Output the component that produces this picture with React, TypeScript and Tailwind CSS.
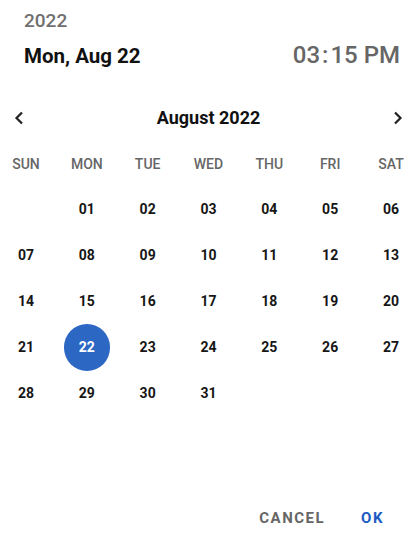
import React from "react";

const days = ["SUN", "MON", "TUE", "WED", "THU", "FRI", "SAT"];
const weeks: (number | null)[][] = [
  [null, 1, 2, 3, 4, 5, 6],
  [7, 8, 9, 10, 11, 12, 13],
  [14, 15, 16, 17, 18, 19, 20],
  [21, 22, 23, 24, 25, 26, 27],
  [28, 29, 30, 31, null, null, null],
];

export default function App() {
  return (
    <div
      className="w-[417px] h-[542px] bg-white flex flex-col overflow-hidden"
      style={{ fontFamily: "Roboto, 'Noto Sans', sans-serif" }}
    >
      <div className="pt-[9px] pl-[24px] pr-[17px]">
        <div className="text-[19px] leading-[24px] font-medium text-[#6f6f6f]">2022</div>
        <div className="mt-[8px] flex items-baseline justify-between">
          <div className="text-[20.5px] leading-[28px] font-bold text-[#111]">Mon, Aug 22</div>
          <div className="text-[24px] leading-[28px] font-medium text-[#666]">
            03<span className="px-[2px]">:</span>15 PM
          </div>
        </div>
      </div>

      <div className="mt-[36px] h-[24px] flex items-center justify-between px-[13px]">
        <svg width="12" height="14" viewBox="0 0 12 14" className="text-[#222]">
          <path d="M9 1.5 L3.5 7 L9 12.5" fill="none" stroke="currentColor" strokeWidth="2.2" />
        </svg>
        <div className="text-[18px] leading-[24px] font-bold text-[#111]">August 2022</div>
        <svg width="12" height="14" viewBox="0 0 12 14" className="text-[#222]">
          <path d="M3 1.5 L8.5 7 L3 12.5" fill="none" stroke="currentColor" strokeWidth="2.2" />
        </svg>
      </div>

      <div className="mt-[24px] flex justify-between px-[6px]">
        {days.map((d) => (
          <div key={d} className="w-[40px] text-center text-[14px] leading-[20px] font-medium text-[#666]">
            {d}
          </div>
        ))}
      </div>

      <div className="mt-[12px] flex flex-col">
        {weeks.map((w, i) => (
          <div key={i} className="flex justify-between px-[3px] h-[46px]">
            {w.map((n, j) => (
              <div key={j} className="w-[46px] h-[46px] flex items-center justify-center">
                {n !== null &&
                  (n === 22 ? (
                    <div className="w-[47px] h-[47px] rounded-full bg-[#2c67c3] flex items-center justify-center text-white text-[14px] font-bold">
                      22
                    </div>
                  ) : (
                    <span className="text-[14px] font-bold text-[#161616]">
                      {n.toString().padStart(2, "0")}
                    </span>
                  ))}
              </div>
            ))}
          </div>
        ))}
      </div>

      <div className="mt-auto mb-[14px] flex justify-end items-center gap-[36px] pr-[33px]">
        <div className="text-[15px] leading-[20px] font-bold tracking-[1.5px] text-[#666]">CANCEL</div>
        <div className="text-[15px] leading-[20px] font-bold tracking-[1.5px] text-[#1d5bc4]">OK</div>
      </div>
    </div>
  );
}
